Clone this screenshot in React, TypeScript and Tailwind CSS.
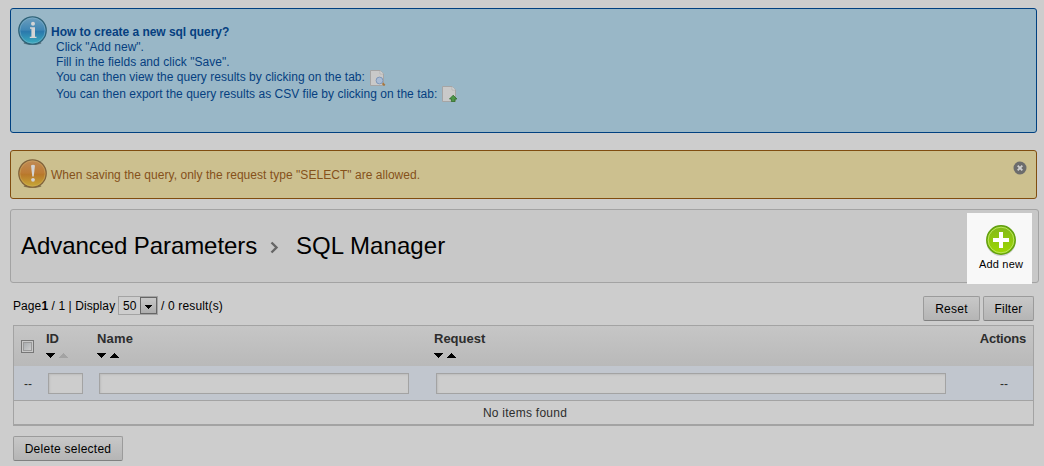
import React from "react";

function InfoIcon() {
  return (
    <svg className="block shrink-0" width="30" height="30" viewBox="0 0 30 30">
      <defs>
        <linearGradient id="ig" x1="0" y1="0" x2="0" y2="1">
          <stop offset="0" stopColor="#6f9fbd" />
          <stop offset=".48" stopColor="#3f86b4" />
          <stop offset=".54" stopColor="#2a78ac" />
          <stop offset="1" stopColor="#3cb0c0" />
        </linearGradient>
      </defs>
      <ellipse cx="14.5" cy="27" rx="9" ry="1.7" fill="#5d7682" />
      <circle cx="14.5" cy="14.500" r="13.700" fill="url(#ig)" stroke="#2f6277" strokeWidth="1.300" />
      <circle cx="14.500" cy="14.500" r="12.600" fill="none" stroke="#86b9cf" strokeWidth=".5" />
      <circle cx="15" cy="7.700" r="2" fill="#d4d4d4" />
      <path d="M12 11.300h5v9.400h1.500v1.300h-6.700v-1.300h1.600v-7.900h-1.400z" fill="#d4d4d4" />
    </svg>
  );
}

function WarnIcon() {
  return (
    <svg className="block shrink-0" width="30" height="30" viewBox="0 0 30 30">
      <defs>
        <linearGradient id="wg" x1="0" y1="0" x2="0" y2="1">
          <stop offset="0" stopColor="#c08b58" />
          <stop offset=".48" stopColor="#bd7c35" />
          <stop offset=".54" stopColor="#b8782a" />
          <stop offset="1" stopColor="#c8ab38" />
        </linearGradient>
      </defs>
      <ellipse cx="14.500" cy="27.100" rx="9" ry="1.700" fill="#80744e" />
      <circle cx="14.500" cy="14.500" r="13.700" fill="url(#wg)" stroke="#80633c" strokeWidth="1.300" />
      <circle cx="14.500" cy="14.500" r="12.600" fill="none" stroke="#ceb065" strokeWidth=".5" />
      <path d="M13 6.500q2-1.600 4 0l-1.300 11h-1.400z" fill="#d4d4d4" />
      <circle cx="15" cy="20.800" r="1.900" fill="#d4d4d4" />
    </svg>
  );
}

function PageIcon({ kind }: { kind: "view" | "export" }) {
  return (
    <svg className="block" width="16" height="16" viewBox="0 0 16 16">
      <path d="M.5 .5h9.500l3.500 3.500v11.500h-13z" fill="#c9c9c9" stroke="#a5a5a5" />
      <path d="M10 .8v3.200h3.300" fill="#d8d8d8" stroke="#acacac" strokeWidth=".7" />
      {kind === "view" ? (
        <>
          <circle cx="9.500" cy="10.500" r="3.400" fill="#a9bcd6" stroke="#7f98ba" />
          <path d="M12.500 13.200l2.200 2.200" stroke="#a5763f" strokeWidth="2" />
        </>
      ) : (
        <path d="M11.200 9.200l3.700 3.800h-1.900v2.600H9.400V13H7.500z" fill="#4d9648" stroke="#2c6b29" strokeWidth=".8" />
      )}
    </svg>
  );
}

function Sort({ dim = false }: { dim?: boolean }) {
  return (
    <svg className="block" width="23" height="6" viewBox="0 0 23 6" shapeRendering="crispEdges">
      <path d="M0 0h9v1h-1v1h-1v1h-1v1h-1v1h-1v-1h-1v-1h-1v-1h-1v-1h-1z" fill="#000" />
      <path d="M13 5h9v-1h-1v-1h-1v-1h-1v-1h-1v-1h-1v1h-1v1h-1v1h-1v1h-1z" fill={dim ? "#a3a3a3" : "#000"} />
    </svg>
  );
}

function Button({ children, className }: { children: React.ReactNode; className: string }) {
  return (
    <button
      className={`h-[25px] rounded-[2px] border border-[#9b9b9b] border-b-[#808080] bg-linear-to-b from-[#c8c8c8] to-[#b5b5b5] pt-px text-[12px] leading-[23px] tracking-[0.26px] whitespace-nowrap text-black ${className}`}
    >
      {children}
    </button>
  );
}

function Field({ className }: { className: string }) {
  return (
    <input
      className={`block h-[21px] border border-[#a3a3a3] bg-[#cdcdcd] shadow-[inset_1px_1px_2px_#bdbdbd] outline-none ${className}`}
    />
  );
}

export default function App() {
  return (
    <div className="h-[466px] w-[1044px] overflow-hidden bg-[#cdcdcd] pt-2 pl-2.5 font-['Liberation_Sans',Arial,sans-serif] text-[12px] text-black">
      <section className="flex h-[125px] w-[1027px] rounded-[3px] border border-[#004080] bg-[#99b7c7] pt-[7px] pl-[7px] text-[#063f80]">
        <InfoIcon />
        <div className="pt-[9px] pl-[3px] whitespace-nowrap">
          <p className="h-[15px] leading-[15px] font-bold tracking-[-0.04px]">How to create a new sql query?</p>
          <div className="pl-[5px]">
            <p className="h-[15px] leading-[15px]">Click "Add new".</p>
            <p className="h-[15px] leading-[15px] tracking-[0.05px]">Fill in the fields and click "Save".</p>
            <p className="flex h-[16px] leading-[15px]">
              <span className="mr-[4px] w-[310px] tracking-[0.02px]">You can then view the query results by clicking on the tab:</span>
              <PageIcon kind="view" />
            </p>
            <p className="flex h-[17px] leading-[17px]">
              <span className="mr-[4px] w-[382px] tracking-[0.02px]">You can then export the query results as CSV file by clicking on the tab:</span>
              <PageIcon kind="export" />
            </p>
          </div>
        </div>
      </section>

      <section className="mt-[17px] flex h-[49px] w-[1027px] rounded-[3px] border border-[#804d10] bg-[#ccc08f] pt-2 pl-[7px] text-[#85511a]">
        <WarnIcon />
        <p className="flex-1 pt-[9px] pl-[3px] leading-[15px] tracking-[0.04px]">When saving the query, only the request type "SELECT" are allowed.</p>
        <svg className="mt-[2px] mr-[9px] block" width="14" height="14" viewBox="0 0 14 14">
          <circle cx="7" cy="7" r="6.500" fill="#6c6c6c" />
          <path d="M4.700 4.700l4.600 4.600M9.300 4.700l-4.600 4.600" stroke="#cfcfcf" strokeWidth="1.900" />
        </svg>
      </section>

      <header className="mt-[10px] flex h-[74px] w-[1029px] rounded-[3px] border border-[#a3a3a3] bg-[#c8c8c8] pl-[10px]">
        <h1 className="flex flex-1 pt-[21px] text-[24px] leading-[30px] whitespace-nowrap">
          <span className="w-[248px] tracking-[-0.07px]">Advanced Parameters</span>
          <svg className="mt-[10px] mr-[16px] block" width="11" height="13" viewBox="0 0 11 13">
            <path d="M2.500 1.500l5 5-5 5" fill="none" stroke="#666" strokeWidth="2.400" />
          </svg>
          <span className="tracking-[0.06px]">SQL Manager</span>
        </h1>
        <div className="mt-[3px] mr-[6px] flex h-[71px] w-[65px] flex-col items-center bg-[#f8f8f8] pt-[11px] pl-[2px]">
          <svg className="block" width="34" height="33" viewBox="0 0 34 33">
            <defs>
              <linearGradient id="ag" x1="0" y1="0" x2="0" y2="1">
                <stop offset="0" stopColor="#82b81c" />
                <stop offset="1" stopColor="#9ed800" />
              </linearGradient>
            </defs>
            <ellipse cx="17" cy="18.200" rx="14.500" ry="14" fill="#d5d5d5" />
            <circle cx="17" cy="16" r="14.200" fill="url(#ag)" stroke="#62a010" strokeWidth="1.500" />
            <circle cx="17" cy="16" r="12.800" fill="none" stroke="#b9e45c" strokeWidth="1" />
            <path d="M15 8h4v6h6v4h-6v6h-4v-6h-6v-4h6z" fill="#fff" />
          </svg>
          <span className="pl-px text-[11px] leading-[14px] tracking-[0.2px] whitespace-nowrap">Add new</span>
        </div>
      </header>

      <main className="ml-[3px] w-[1021px]">
        <div className="flex h-[42px] items-start pt-[13px]">
          <div className="flex h-[19px] flex-1 items-center whitespace-nowrap">
            <span className="w-[105px] tracking-[0.09px]">Page<b>1</b> / 1 | Display</span>
            <span className="flex h-[19px] w-[40px] items-center border border-[#a3a3a3] pl-1">
              <span className="w-[17px] tracking-[0.2px]">50</span>
              <span className="flex h-[17px] w-[17px] items-center justify-center border border-[#666] bg-linear-to-b from-[#c8c8c8] to-[#adadad]">
                <svg className="mt-[2px] block" width="7" height="4" viewBox="0 0 7 4" shapeRendering="crispEdges">
                  <path d="M0 0h7v1h-1v1h-1v1h-1v1h-1v-1h-1v-1h-1v-1h-1z" />
                </svg>
              </span>
            </span>
            <span className="ml-[3px] tracking-[0.15px]">/ 0 result(s)</span>
          </div>
          <div className="flex gap-[3px]">
            <Button className="w-[57px]">Reset</Button>
            <Button className="w-[51px]">Filter</Button>
          </div>
        </div>

        <div className="h-[101px] border border-b-2 border-[#a3a3a3] text-[#2d2d2d]">
          <div className="flex h-[40px] bg-linear-to-b from-[#c6c6c6] to-[#b9b9b9] text-[13px] font-bold">
            <div className="w-[32px] pt-[14px] pl-[7px]">
              <span className="block h-[13px] w-[13px] border border-[#777] bg-[#c8c8c8] p-px">
                <span className="block h-[9px] w-[9px] border border-[#999] bg-linear-to-br from-[#a9adb0] to-[#cdcdcd]" />
              </span>
            </div>
            <div className="w-[51px] pt-[5px]">
              <div className="mb-[7px] h-[15px] leading-[15px]">ID</div>
              <Sort dim />
            </div>
            <div className="w-[337px] pt-[5px]">
              <div className="mb-[7px] h-[15px] leading-[15px] tracking-[0.2px]">Name</div>
              <Sort />
            </div>
            <div className="flex-1 pt-[5px]">
              <div className="mb-[7px] h-[15px] leading-[15px]">Request</div>
              <Sort />
            </div>
            <div className="pt-[5px] pr-[7px] leading-[15px] tracking-[-0.2px]">Actions</div>
          </div>
          <div className="flex h-[35px] items-start border-b border-[#a3a3a3] bg-[#c1c6ce] pt-[7px]">
            <span className="w-[34px] pt-px pl-[10px] leading-[20px]">--</span>
            <Field className="mr-[16px] w-[35px]" />
            <Field className="mr-[27px] w-[310px]" />
            <Field className="w-[510px]" />
            <span className="ml-[54px] pt-px leading-[20px]">--</span>
          </div>
          <div className="flex h-[23px] items-center justify-center tracking-[0.25px]">
            <span className="pl-[3px]">No items found</span>
          </div>
        </div>
        <div className="pt-[10px]">
          <Button className="w-[110px]">Delete selected</Button>
        </div>
      </main>
    </div>
  );
}
